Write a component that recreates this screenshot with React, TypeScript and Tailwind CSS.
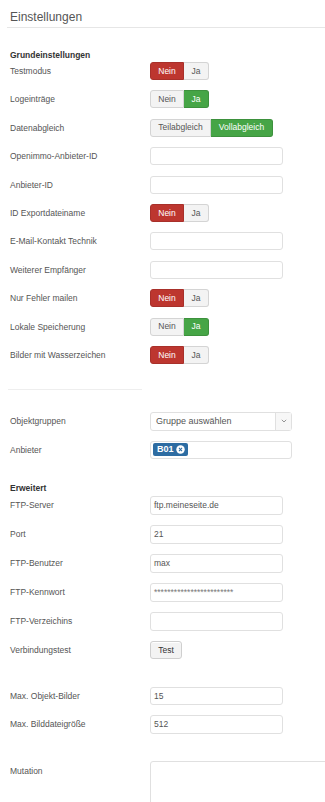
import React from "react";

type Opt = { label: string; width: string };

const janein: Opt[] = [
  { label: "Nein", width: "w-[34px]" },
  { label: "Ja", width: "w-[25px]" },
];

const abgleich: Opt[] = [
  { label: "Teilabgleich", width: "w-[61px]" },
  { label: "Vollabgleich", width: "w-[62px]" },
];

const Toggle = ({
  options,
  active,
  tone,
}: {
  options: Opt[];
  active: number;
  tone: "red" | "green";
}) => (
  <div className="flex h-[18px]">
    {options.map((o, i) => {
      const on = i === active;
      const activeCls =
        tone === "red"
          ? "bg-[#bd362f] border-[#a8302a] text-white"
          : "bg-[#46a546] border-[#3d913d] text-white";
      return (
        <div
          key={o.label}
          className={`${o.width} flex items-center justify-center border text-[8.5px] ${
            i === 0 ? "rounded-l-[3px]" : "rounded-r-[3px] border-l-0"
          } ${on ? activeCls : "bg-[#f3f3f3] border-[#d4d4d4] text-[#555]"}`}
        >
          {o.label}
        </div>
      );
    })}
  </div>
);

const Input = ({ value, h = "h-[18px]" }: { value?: string; h?: string }) => (
  <div
    className={`${h} w-[133px] rounded-[3px] border border-[#e0e0e0] bg-white flex items-center px-[3px] text-[8.5px] text-[#555]`}
  >
    {value}
  </div>
);

const Row = ({
  label,
  children,
  h = "h-[18px]",
}: {
  label: string;
  children: React.ReactNode;
  h?: string;
}) => (
  <div className={`flex ${h} items-center`}>
    <div className="w-[143px] shrink-0 pl-[3px] text-[8.5px] leading-[12px] text-[#555]">
      {label}
    </div>
    {children}
  </div>
);

const Heading = ({ children }: { children: React.ReactNode }) => (
  <div className="h-[12px] pl-[3px] text-[8.5px] font-bold leading-[12px] text-[#333]">
    {children}
  </div>
);

export default function App() {
  return (
    <div className="w-[325px] h-[802px] overflow-hidden bg-white pl-[7px] font-['Liberation_Sans',Arial,sans-serif]">
      <div className="flex h-[28px] items-end border-b border-[#e6e6e6] pb-[3px] pl-[3px] text-[12px] leading-[14px] text-[#555]">
        Einstellungen
      </div>

      <div className="mt-[21px]">
        <Heading>Grundeinstellungen</Heading>
      </div>
      <div className="mt-[1px] flex flex-col gap-[10.4px]">
        <Row label="Testmodus">
          <Toggle options={janein} active={0} tone="red" />
        </Row>
        <Row label="Logeinträge">
          <Toggle options={janein} active={1} tone="green" />
        </Row>
        <Row label="Datenabgleich">
          <Toggle options={abgleich} active={1} tone="green" />
        </Row>
        <Row label="Openimmo-Anbieter-ID">
          <Input />
        </Row>
        <Row label="Anbieter-ID">
          <Input />
        </Row>
        <Row label="ID Exportdateiname">
          <Toggle options={janein} active={0} tone="red" />
        </Row>
        <Row label="E-Mail-Kontakt Technik">
          <Input />
        </Row>
        <Row label="Weiterer Empfänger">
          <Input />
        </Row>
        <Row label="Nur Fehler mailen">
          <Toggle options={janein} active={0} tone="red" />
        </Row>
        <Row label="Lokale Speicherung">
          <Toggle options={janein} active={1} tone="green" />
        </Row>
        <Row label="Bilder mit Wasserzeichen">
          <Toggle options={janein} active={0} tone="red" />
        </Row>
      </div>

      <div className="ml-[1px] mt-[25px] h-px w-[134px] bg-[#eeeeee]" />

      <div className="mt-[22px]">
        <Row label="Objektgruppen" h="h-[19px]">
          <div className="flex h-[19px] w-[142px] rounded-[3px] border border-[#e0e0e0] bg-white">
            <div className="flex flex-1 items-center pl-[5px] text-[9px] text-[#555]">
              Gruppe auswählen
            </div>
            <div className="flex w-[16px] items-center justify-center border-l border-[#e0e0e0] bg-[#f7f7f7]">
              <svg width="6" height="4" viewBox="0 0 6 4">
                <polyline
                  points="0.8,0.8 3,3 5.2,0.8"
                  fill="none"
                  stroke="#888"
                  strokeWidth="0.9"
                />
              </svg>
            </div>
          </div>
        </Row>
      </div>
      <div className="mt-[10px]">
        <Row label="Anbieter">
          <div className="flex h-[18px] w-[142px] items-center rounded-[3px] border border-[#e0e0e0] bg-white pl-[2px]">
            <div className="flex h-[13px] items-center gap-[2px] rounded-[2px] bg-[#2d6ca2] pl-[4px] pr-[3px] text-[9px] font-bold text-white">
              B01
              <svg width="9" height="9" viewBox="0 0 10 10">
                <circle cx="5" cy="5" r="4.7" fill="#fff" />
                <path
                  d="M3.3 3.3 L6.7 6.7 M6.7 3.3 L3.3 6.7"
                  stroke="#2d6ca2"
                  strokeWidth="1.2"
                />
              </svg>
            </div>
          </div>
        </Row>
      </div>

      <div className="mt-[23px]">
        <Heading>Erweitert</Heading>
      </div>
      <div className="mt-[2px] flex flex-col gap-[10px]">
        <Row label="FTP-Server" h="h-[19px]">
          <Input value="ftp.meineseite.de" h="h-[19px]" />
        </Row>
        <Row label="Port" h="h-[19px]">
          <Input value="21" h="h-[19px]" />
        </Row>
        <Row label="FTP-Benutzer" h="h-[19px]">
          <Input value="max" h="h-[19px]" />
        </Row>
        <Row label="FTP-Kennwort" h="h-[19px]">
          <div className="flex h-[19px] w-[133px] items-center rounded-[3px] border border-[#e0e0e0] bg-white px-[3px] text-[8.5px] text-[#777]">
            ************************
          </div>
        </Row>
        <Row label="FTP-Verzeichins" h="h-[19px]">
          <Input h="h-[19px]" />
        </Row>
        <Row label="Verbindungstest" h="h-[19px]">
          <div className="flex h-[18px] w-[32px] items-center justify-center rounded-[3px] border border-[#cfcfcf] bg-[#f3f3f3] text-[8.5px] text-[#333] shadow-[inset_0_1px_0_#fff]">
            Test
          </div>
        </Row>
      </div>

      <div className="mt-[27px] flex flex-col gap-[10px]">
        <Row label="Max. Objekt-Bilder">
          <Input value="15" />
        </Row>
        <Row label="Max. Bilddateigröße" h="h-[19px]">
          <Input value="512" h="h-[19px]" />
        </Row>
      </div>

      <div className="mt-[27px] flex items-start">
        <div className="w-[143px] shrink-0 pl-[3px] pt-[4px] text-[8.5px] leading-[12px] text-[#555]">
          Mutation
        </div>
        <div className="h-[70px] w-[200px] shrink-0 rounded-[3px] border border-[#e0e0e0] bg-white" />
      </div>
    </div>
  );
}
